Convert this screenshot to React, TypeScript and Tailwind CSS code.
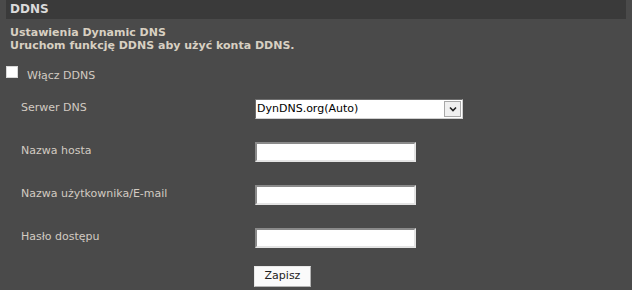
import { useState } from 'react';

const rows = [
    { label: 'Serwer DNS', kind: 'select' },
    { label: 'Nazwa hosta', kind: 'text' },
    { label: 'Nazwa użytkownika/E-mail', kind: 'text' },
    { label: 'Hasło dostępu', kind: 'password' },
];

export default function App() {
    const [enabled, setEnabled] = useState(false);

    return (
        <div className="w-[632px] h-[290px] overflow-hidden bg-[#4a4a4a] font-['DejaVu_Sans',Verdana,sans-serif] text-[11px]">
            {/* Section header */}
            <div className="mx-[6px] h-[19px] bg-[#3a3a3a] pl-[4px] text-[12px] leading-[19px] font-semibold text-[#dadada]">
                DDNS
            </div>

            {/* Description */}
            <div className="pl-[10px] pt-[7px] leading-[13px] font-bold text-[#d8d0c2]">
                <p>Ustawienia Dynamic DNS</p>
                <p>Uruchom funkcję DDNS aby użyć konta DDNS.</p>
            </div>

            {/* Enable */}
            <label className="mt-[14px] ml-[6px] flex items-start gap-[9px] text-[#d2cbc2]">
                <input
                    type="checkbox"
                    checked={enabled}
                    onChange={(e) => setEnabled(e.target.checked)}
                    className="appearance-none w-[12px] h-[12px] bg-white border border-[#d8d8d8] m-0"
                />
                <span className="leading-[13px] mt-[3px]">Włącz DDNS</span>
            </label>

            {/* Form rows */}
            <div className="mt-[5px] pl-[21px]">
                {rows.map((row) => (
                    <div key={row.label} className="h-[43px] flex items-center">
                        <span className="w-[234px] text-[#d2cbc2]">{row.label}</span>
                        {row.kind === 'select' ? (
                            <div className="relative w-[208px] h-[20px]">
                                <select className="appearance-none w-full h-full bg-white text-black border border-t-[#6e6e6e] border-l-[#6e6e6e] border-r-[#cfcfcf] border-b-[#cfcfcf] pl-[1px] text-[11px] leading-[18px] outline-none">
                                    <option>DynDNS.org(Auto)</option>
                                </select>
                                <div className="absolute right-[2px] top-[2px] w-[17px] h-[16px] bg-[#f0f0f0] border border-[#a8a8a8] flex items-center justify-center pointer-events-none">
                                    <svg width="8" height="6" viewBox="0 0 8 6">
                                        <path d="M1 1.5 L4 4.5 L7 1.5" fill="none" stroke="#222" strokeWidth="1.6" />
                                    </svg>
                                </div>
                            </div>
                        ) : (
                            <input
                                type={row.kind}
                                className="w-[161px] h-[20px] bg-white border-2 border-t-[#8a8a8a] border-l-[#8a8a8a] border-r-[#e4e4e4] border-b-[#e4e4e4] outline-none text-[11px] px-[2px]"
                            />
                        )}
                    </div>
                ))}

                <div className="mt-[7px] pl-[233px]">
                    <button className="w-[57px] h-[21px] bg-[#fafafa] border border-t-[#e8e8e8] border-l-[#e8e8e8] border-r-[#b4b4b4] border-b-[#b4b4b4] text-[#222] text-[11px]">
                        Zapisz
                    </button>
                </div>
            </div>
        </div>
    );
}
